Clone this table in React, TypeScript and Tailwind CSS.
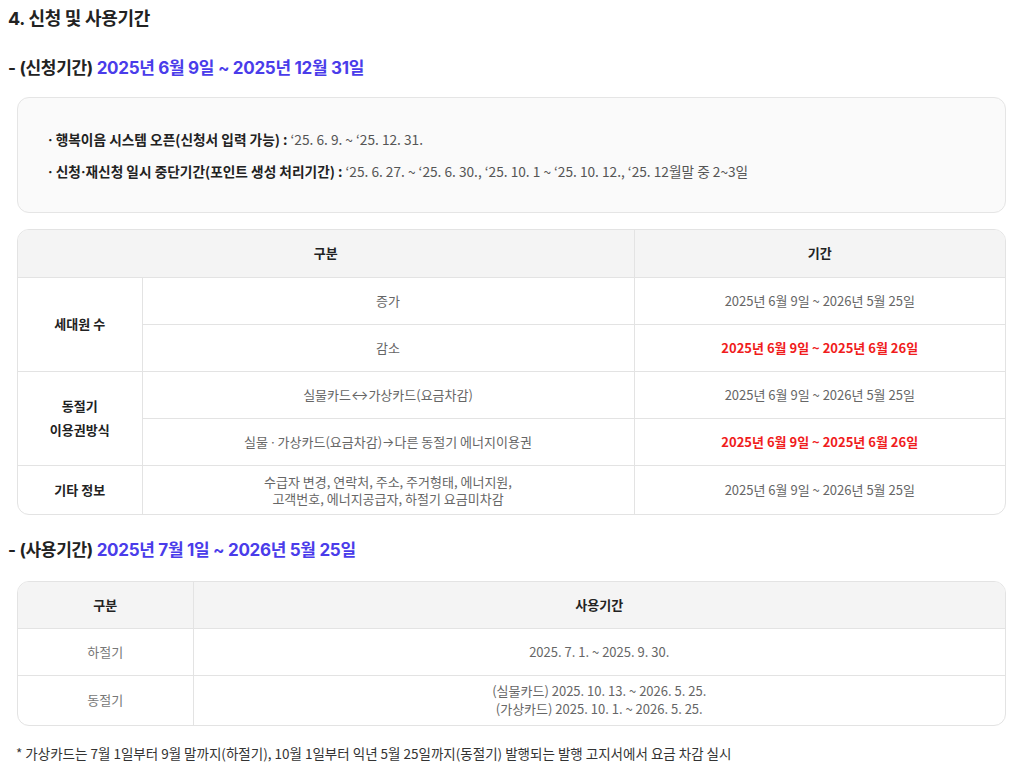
import React from "react";

const font = { fontFamily: "Inter, 'Noto Sans CJK KR', sans-serif" };
const body = { fontFamily: "'Noto Sans CJK KR', sans-serif" };

// narrow punctuation (middle dot, arrows) taken from Inter so it isn't full-width
const N = ({ children }: { children: React.ReactNode }) => (
  <span style={{ fontFamily: "Inter, sans-serif" }}>{children}</span>
);

const Period = ({ red, children }: { red?: boolean; children: React.ReactNode }) => (
  <span className={red ? "font-bold text-[#f01c1c]" : "text-[#666]"}>{children}</span>
);

const App = () => {
  const td = "border-[#e3e3e3] text-center align-middle";
  return (
    <div className="w-[1024px] bg-white pl-2 pr-[18px] pt-[7px] text-[#222]" style={font}>
      <h2 className="text-[18px] font-bold leading-6 tracking-[-0.3px]">4. 신청 및 사용기간</h2>

      <h3 className="mt-[25px] text-[17px] font-bold leading-6 tracking-[-0.3px]">
        - (신청기간) <span className="text-[#4a3cea]">2025년 6월 9일 ~ 2025년 12월 31일</span>
      </h3>

      <div
        className="ml-[9px] mt-[17px] flex h-[116px] flex-col justify-center gap-[11px] rounded-xl border border-[#e5e5e5] bg-[#fafafa] px-[30px] text-[13.7px] leading-5"
        style={body}
      >
        <p>
          <span className="font-bold"><N>·</N> 행복이음 시스템 오픈(신청서 입력 가능) :</span>
          <span className="text-[#555]"> ‘25. 6. 9. ~ ‘25. 12. 31.</span>
        </p>
        <p>
          <span className="font-bold"><N>·</N> 신청<N>·</N>재신청 일시 중단기간(포인트 생성 처리기간) :</span>
          <span className="text-[#555]"> ‘25. 6. 27. ~ ‘25. 6. 30., ‘25. 10. 1 ~ ‘25. 10. 12., ‘25. 12월말 중 2~3일</span>
        </p>
      </div>

      <div
        className="ml-[9px] mt-4 overflow-hidden rounded-xl border border-[#e3e3e3] text-[13px] leading-5"
        style={body}
      >
        <table className="w-full border-collapse">
          <colgroup>
            <col className="w-[124px]" />
            <col className="w-[492px]" />
            <col />
          </colgroup>
          <thead>
            <tr className="h-[47px] bg-[#f4f4f4]">
              <th colSpan={2} className={`${td} border-r border-b font-bold`}>구분</th>
              <th className={`${td} border-b font-bold`}>기간</th>
            </tr>
          </thead>
          <tbody>
            <tr className="h-[47px]">
              <td rowSpan={2} className={`${td} border-r border-b font-bold`}>세대원 수</td>
              <td className={`${td} border-r border-b text-[#666]`}>증가</td>
              <td className={`${td} border-b`}><Period>2025년 6월 9일 ~ 2026년 5월 25일</Period></td>
            </tr>
            <tr className="h-[47px]">
              <td className={`${td} border-r border-b text-[#666]`}>감소</td>
              <td className={`${td} border-b`}><Period red>2025년 6월 9일 ~ 2025년 6월 26일</Period></td>
            </tr>
            <tr className="h-[47px]">
              <td rowSpan={2} className={`${td} border-r border-b font-bold leading-6`}>동절기<br />이용권방식</td>
              <td className={`${td} border-r border-b text-[#666]`}>실물카드<N>↔</N>가상카드(요금차감)</td>
              <td className={`${td} border-b`}><Period>2025년 6월 9일 ~ 2026년 5월 25일</Period></td>
            </tr>
            <tr className="h-[47px]">
              <td className={`${td} border-r border-b text-[#666]`}>실물 <N>·</N> 가상카드(요금차감)<N>→</N>다른 동절기 에너지이용권</td>
              <td className={`${td} border-b`}><Period red>2025년 6월 9일 ~ 2025년 6월 26일</Period></td>
            </tr>
            <tr className="h-[49px]">
              <td className={`${td} border-r font-bold`}>기타 정보</td>
              <td className={`${td} border-r text-[#666] leading-[17px]`}>
                수급자 변경, 연락처, 주소, 주거형태, 에너지원,<br />고객번호, 에너지공급자, 하절기 요금미차감
              </td>
              <td className={td}><Period>2025년 6월 9일 ~ 2026년 5월 25일</Period></td>
            </tr>
          </tbody>
        </table>
      </div>

      <h3 className="mt-[23px] text-[17px] font-bold leading-6 tracking-[-0.3px]">
        - (사용기간) <span className="text-[#4a3cea]">2025년 7월 1일 ~ 2026년 5월 25일</span>
      </h3>

      <div
        className="ml-[9px] mt-[19px] overflow-hidden rounded-xl border border-[#e3e3e3] text-[13px] leading-[18px]"
        style={body}
      >
        <table className="w-full border-collapse">
          <colgroup>
            <col className="w-[175px]" />
            <col />
          </colgroup>
          <thead>
            <tr className="h-[46px] bg-[#f4f4f4]">
              <th className={`${td} border-r border-b font-bold`}>구분</th>
              <th className={`${td} border-b font-bold`}>사용기간</th>
            </tr>
          </thead>
          <tbody>
            <tr className="h-[47px]">
              <td className={`${td} border-r border-b text-[#777]`}>하절기</td>
              <td className={`${td} border-b text-[#666]`}>2025. 7. 1. ~ 2025. 9. 30.</td>
            </tr>
            <tr className="h-[50px]">
              <td className={`${td} border-r text-[#777]`}>동절기</td>
              <td className={`${td} text-[#666]`}>
                (실물카드) 2025. 10. 13. ~ 2026. 5. 25.<br />(가상카드) 2025. 10. 1. ~ 2026. 5. 25.
              </td>
            </tr>
          </tbody>
        </table>
      </div>

      <p className="mt-[17px] pl-2 text-[13.5px] leading-5 text-[#333]" style={body}>
        * 가상카드는 7월 1일부터 9월 말까지(하절기), 10월 1일부터 익년 5월 25일까지(동절기) 발행되는 발행 고지서에서 요금 차감 실시
      </p>
    </div>
  );
};

export default App;
